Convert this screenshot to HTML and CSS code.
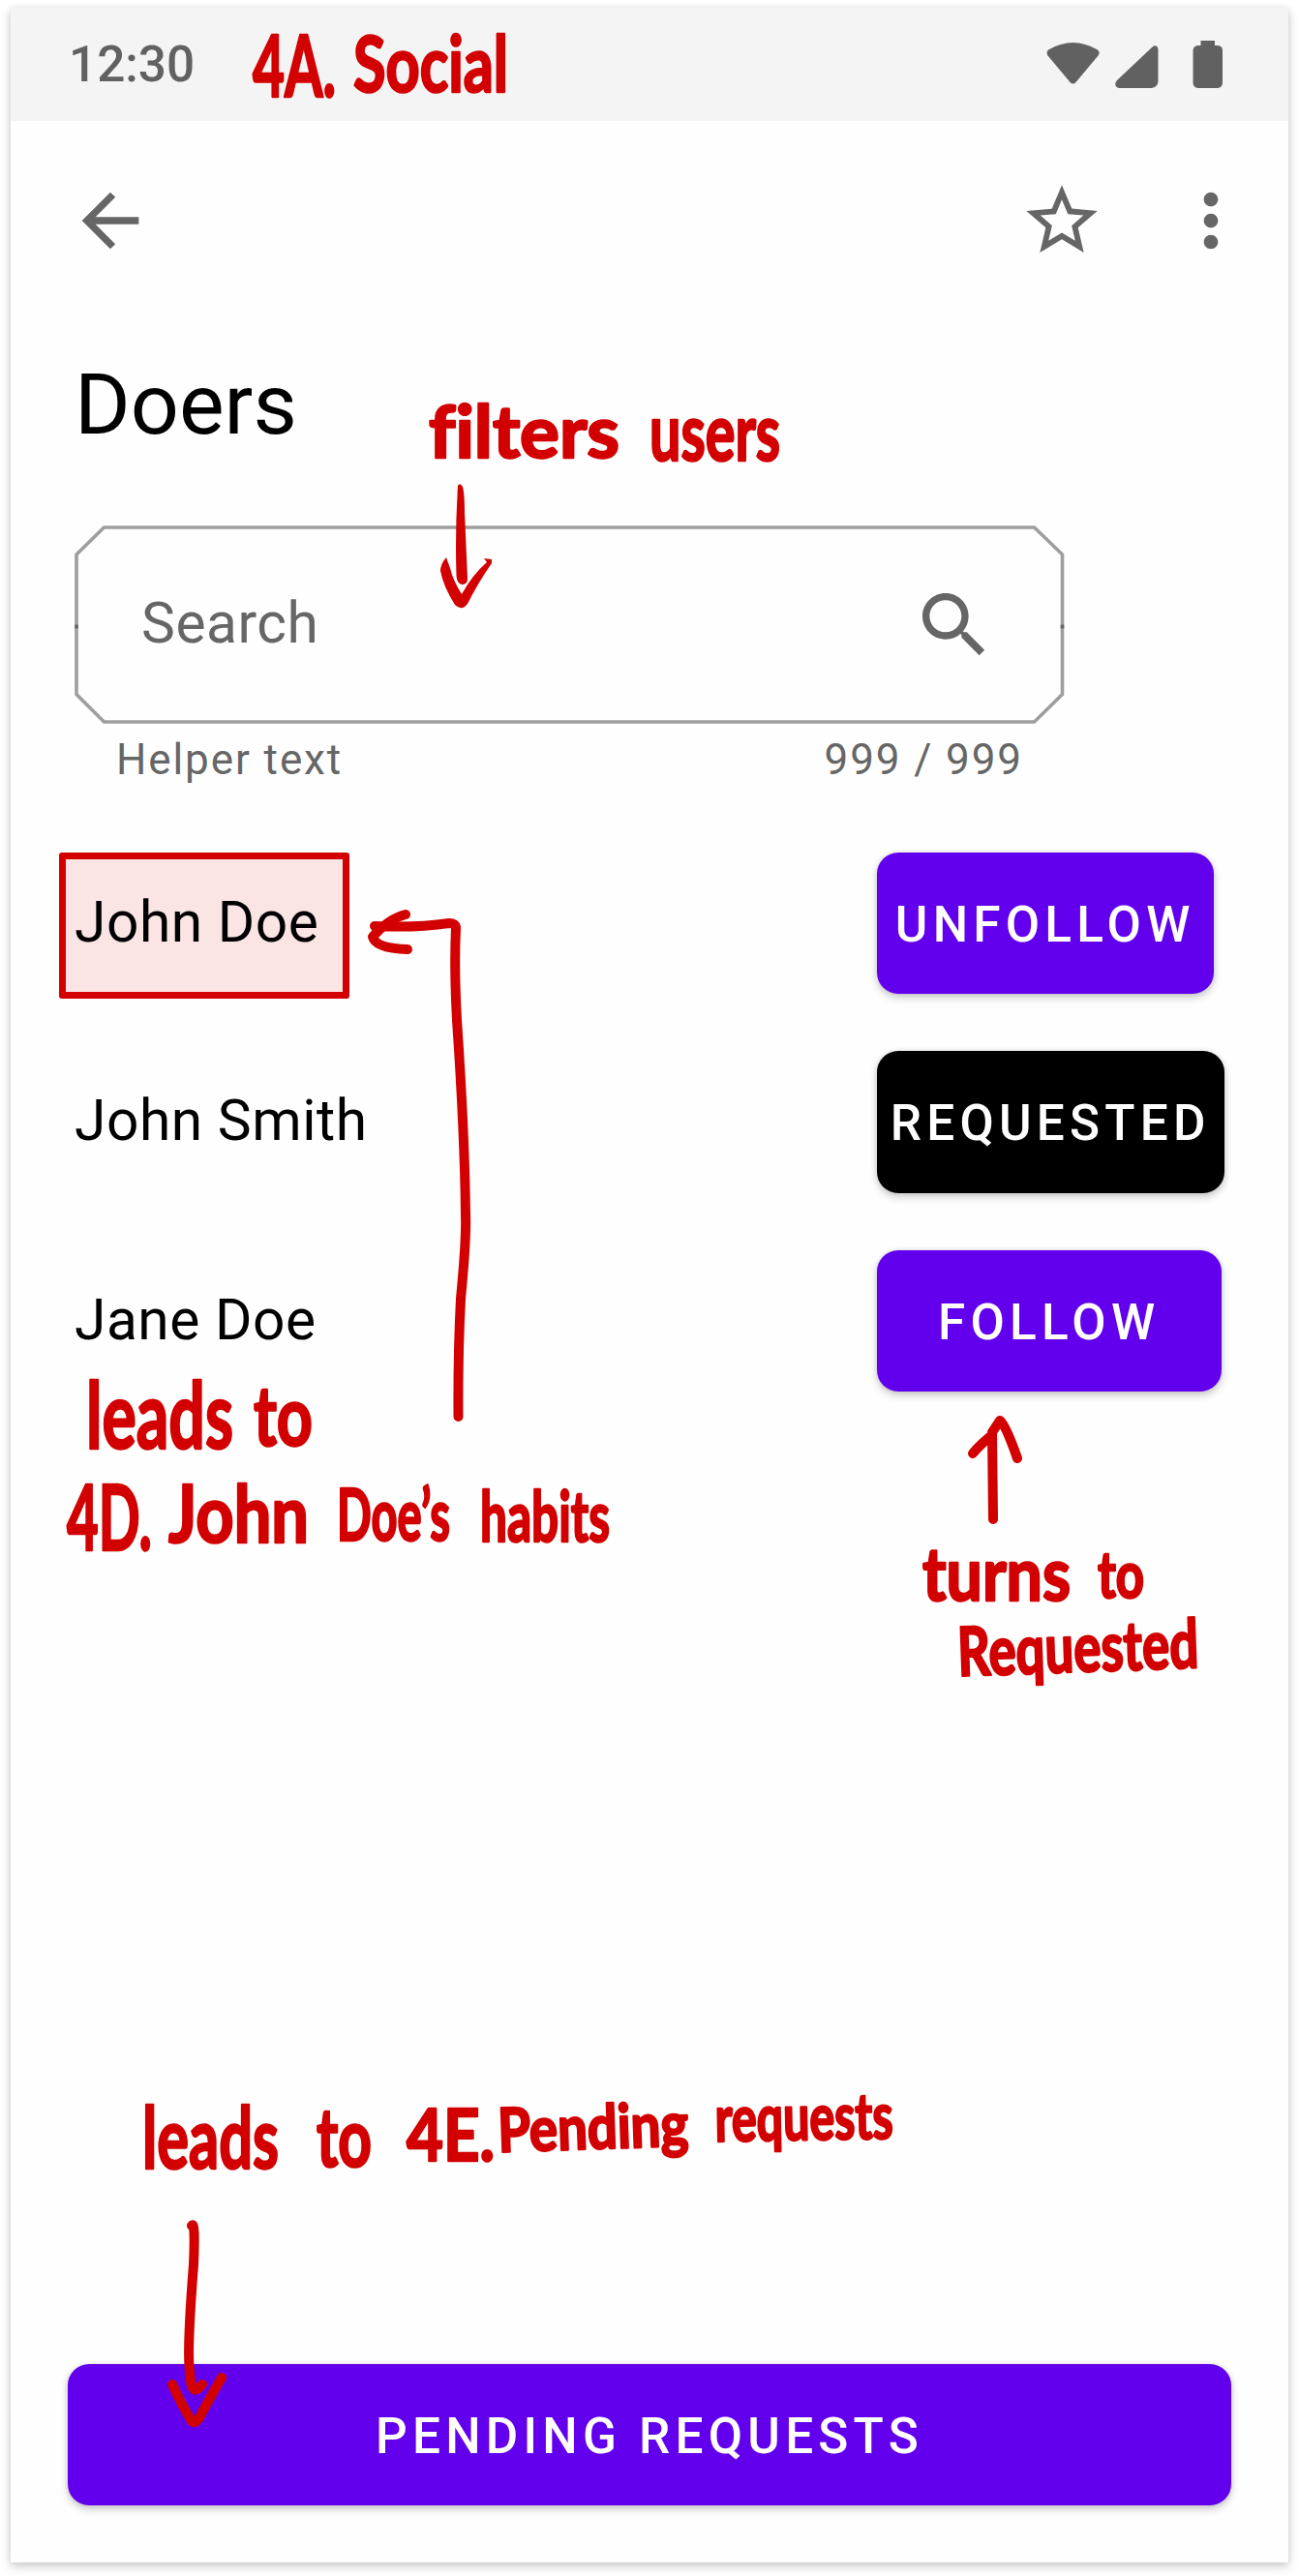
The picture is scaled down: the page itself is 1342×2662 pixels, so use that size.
FILE: index.html
```html
<!DOCTYPE html>
<html lang="en">
<head>
<meta charset="utf-8">
<title>4A. Social</title>
<link rel="stylesheet" href="styles.css">
</head>
<body>
<main class="phone">
  <header class="status">
    <span>12:30</span>
    <svg width="182" height="49" viewBox="0 0 182 49" fill="#616161">
      <path d="M2 9.5Q27.500 -5.500 53 9.500Q56 12 53.500 15.500L30.500 43Q27.500 46 24.500 43L1.500 15.500Q-0.500 12 2 9.500Z"/>
      <path d="M75 49Q71.500 48.500 71.200 45Q71.300 43 73 41L109 7Q111 4.500 113.500 5.500Q115.500 6.500 115.500 9V42Q115 48 108.500 49Z"/>
      <path d="M159.500 0H174V5H177Q182 5.500 182 10V44Q181.500 48.500 177 49H156.500Q152 48.500 151.500 44V10Q152 5.500 156.500 5H159.500Z"/>
    </svg>
  </header>
  <nav class="appbar">
    <svg class="icon" viewBox="0 0 24 24"><path d="M20 11H7.830l5.590-5.590L12 4l-8 8 8 8 1.410-1.410L7.830 13H20z"/></svg>
    <span class="appbar-actions">
      <svg class="icon" viewBox="0 0 24 24"><path d="M22 9.240l-7.190-.62L12 2 9.190 8.630 2 9.240l5.460 4.730L5.820 21 12 17.270 18.180 21l-1.630-7.030zM12 15.400l-3.760 2.270 1-4.280-3.320-2.880 4.380-.38L12 6.100l1.710 4.040 4.380.38-3.320 2.880 1 4.280z"/></svg>
      <svg class="icon" viewBox="0 0 24 24"><path d="M12 8c1.100 0 2-.9 2-2s-.9-2-2-2-2 .9-2 2 .9 2 2 2zm0 2c-1.100 0-2 .9-2 2s.9 2 2 2 2-.9 2-2-.9-2-2-2zm0 6c-1.100 0-2 .9-2 2s.9 2 2 2 2-.9 2-2-.9-2-2-2z"/></svg>
    </span>
  </nav>
  <h1 class="title">Doers</h1>
  <div class="field">
    <svg class="outline" width="1024" height="205" viewBox="0 0 1024 205"><path d="M30.500 2H991.500L1020.500 30V174.500L991.500 203H30.500L2 174.500V30Z" fill="none" stroke="#9e9e9e" stroke-width="3.600"/><path d="M0.200 102.500h3.600v4H0.200zM1018.700 102.500h3.600v4h-3.600z" fill="#666"/></svg>
    <span class="placeholder">Search</span>
    <svg class="icon" viewBox="0 0 24 24"><path d="M15.500 14h-.79l-.28-.27C15.410 12.590 16 11.110 16 9.500 16 5.910 13.090 3 9.500 3S3 5.910 3 9.500 5.910 16 9.500 16c1.610 0 3.090-.59 4.230-1.570l.27.28v.79l5 4.990L20.490 19l-4.990-5zm-6 0C7.010 14 5 11.990 5 9.500S7.010 5 9.500 5 14 7.010 14 9.500 11.990 14 9.500 14z"/></svg>
  </div>
  <div class="helper"><span>Helper text</span><span>999 / 999</span></div>
  <section class="list">
    <div class="row"><span class="name marked">John Doe</span><button class="btn unfollow">UNFOLLOW</button></div>
    <div class="row"><span class="name">John Smith</span><button class="btn requested">REQUESTED</button></div>
    <div class="row"><span class="name">Jane Doe</span><button class="btn follow">FOLLOW</button></div>
  </section>
  <button class="btn pending">PENDING REQUESTS</button>
</main>

<!-- review notes laid over the screen -->
<svg class="notes" width="1342" height="2662" viewBox="0 0 1342 2662">
  <g class="hand">
    <text x="261" y="100" font-size="88" textLength="86" lengthAdjust="spacingAndGlyphs">4A.</text>
    <text x="365" y="95" font-size="80" textLength="160" lengthAdjust="spacingAndGlyphs">Social</text>
    <text x="443" y="473" font-size="75" textLength="197" lengthAdjust="spacingAndGlyphs">filters</text>
    <text x="671" y="476" font-size="82" textLength="135" lengthAdjust="spacingAndGlyphs">users</text>
    <text x="89" y="1497" font-size="96" textLength="152" lengthAdjust="spacingAndGlyphs">leads</text>
    <text x="262" y="1494" font-size="86" textLength="61" lengthAdjust="spacingAndGlyphs">to</text>
    <text x="69" y="1602" font-size="94" textLength="88" lengthAdjust="spacingAndGlyphs">4D.</text>
    <text x="174" y="1594" font-size="82" textLength="145" lengthAdjust="spacingAndGlyphs">John</text>
    <text x="348" y="1592" font-size="75" textLength="117" lengthAdjust="spacingAndGlyphs">Doe’s</text>
    <text x="496" y="1593" font-size="73" textLength="134" lengthAdjust="spacingAndGlyphs">habits</text>
    <text x="953" y="1654" font-size="76" textLength="153" lengthAdjust="spacingAndGlyphs">turns</text>
    <text x="1134" y="1651" font-size="66" textLength="48" lengthAdjust="spacingAndGlyphs">to</text>
    <text x="990" y="1732" font-size="70" textLength="249" lengthAdjust="spacingAndGlyphs" transform="rotate(-2 990 1732)">Requested</text>
    <text x="147" y="2241" font-size="88" textLength="141" lengthAdjust="spacingAndGlyphs">leads</text>
    <text x="327" y="2239" font-size="84" textLength="57" lengthAdjust="spacingAndGlyphs">to</text>
    <text x="420" y="2233" font-size="75" textLength="91" lengthAdjust="spacingAndGlyphs">4E.</text>
    <text x="515" y="2224" font-size="63" textLength="197" lengthAdjust="spacingAndGlyphs" transform="rotate(-2 515 2224)">Pending</text>
    <text x="739" y="2213" font-size="66" textLength="184" lengthAdjust="spacingAndGlyphs" transform="rotate(-1 739 2213)">requests</text>
  </g>
  <g class="ink-fill">
    <path d="M473 502Q475 498 478 503Q480 510 480 530L483 598Q483 604 477 604Q472 603 471.500 595Q470 550 473 502Z"/>
    <path d="M461 576Q455 583 455 590Q458 606 470 625Q477 632 483 624Q494 602 508 582V578L500 577L503 581Q488 594 477 614Q468 600 465 587Z"/>
  </g>
  <g class="ink">
    <path d="M473.500 1464Q473 1400 476 1342Q482 1280 481 1255Q480 1170 472 1054Q469 1000 471 959Q471 954 464 954Q430 959 387 957"/>
    <path d="M419 945Q402 949 385 968Q388 980 421 981"/>
    <path d="M1026 1570L1025 1480L1033 1468Q1038 1470 1051 1507M1005 1502Q1012 1493 1025 1483"/>
    <path d="M198 2300Q202 2294 200 2340Q193 2430 196 2450Q197 2480 209 2464"/>
    <path d="M178 2464Q188 2486 198 2502Q201 2505 205 2500Q219 2474 229 2457"/>
  </g>
</svg>
</body>
</html>
```
FILE: styles.css
```css
* { box-sizing: border-box; }
body {
  margin: 0;
  padding: 8px 11px 14px;
  height: 2662px;
  overflow: hidden;
  position: relative;
  background: #fff;
  font-family: Roboto, sans-serif;
}
.phone {
  width: 1320px;
  height: 2640px;
  display: flex;
  flex-direction: column;
  background: #fefefe;
  box-shadow: 0 4px 10px rgba(0, 0, 0, .2), 0 0 6px rgba(0, 0, 0, .07);
}
.status {
  height: 117px;
  padding: 0 68px 0 60px;
  display: flex;
  align-items: center;
  justify-content: space-between;
  background: #f4f4f4;
  color: #616161;
  font-size: 51.3px;
  font-weight: 500;
  line-height: 60px;
}
.icon { width: 88px; height: 88px; fill: #666; display: block; }
.appbar {
  margin-top: 59px;
  padding: 0 36px 0 59px;
  display: flex;
  justify-content: space-between;
}
.appbar-actions { display: flex; gap: 66px; }
.title {
  margin: 94px 0 0 66px;
  font-size: 88px;
  line-height: 104px;
  font-weight: 400;
  color: #000;
}
.field {
  position: relative;
  width: 1024px;
  height: 205px;
  margin: 73px 0 0 66px;
  padding: 0 71px 0 69px;
  display: flex;
  align-items: center;
  justify-content: space-between;
}
.outline { position: absolute; left: 0; top: 0; }
.placeholder { font-size: 58.67px; letter-spacing: .55px; line-height: 70px; margin-bottom: 3px; color: #666; }
.helper {
  width: 1024px;
  margin: 11px 0 0 66px;
  padding: 0 44px 0 43px;
  display: flex;
  justify-content: space-between;
  font-size: 44px;
  line-height: 52px;
  letter-spacing: 1.9px;
  color: #666;
}
.list {
  margin: 69.500px 0 0 50px;
  display: flex;
  flex-direction: column;
  gap: 59px;
}
.row { display: grid; grid-template-columns: 844.700px auto; justify-content: start; align-items: start; height: 146.500px; }
.name {
  width: 300px;
  height: 151px;
  padding: 37px 0 0 16px;
  font-size: 58.67px;
  line-height: 70px;
  letter-spacing: .55px;
  color: #000;
  white-space: nowrap;
}
.marked { background: #fae4e4; border: 7px solid #d20000; border-radius: 3px; padding: 30px 0 0 9px; }
.btn {
  height: 146.500px;
  padding: 4px 0 0;
  border: 0;
  border-radius: 22px;
  background: #6200ee;
  color: #fff;
  font: 500 51.3px/60px Roboto, sans-serif;
  letter-spacing: 5.230px;
  white-space: nowrap;
  box-shadow: 0 4px 8px rgba(0, 0, 0, .2), 0 0 5px rgba(0, 0, 0, .1);
}
.unfollow { width: 348px; }
.requested { width: 359px; background: #000; }
.follow { width: 356px; }
.pending { width: 1202px; margin: auto 0 59px 59px; }
.notes { position: absolute; left: 0; top: 0; }
.hand text {
  font-family: Lato, sans-serif;
  font-weight: 700;
  font-variant-ligatures: none;
  fill: #d20000;
  stroke: #d20000;
  stroke-width: 2.500px;
  stroke-linejoin: round;
}
.ink-fill { fill: #d20000; }
.ink { fill: none; stroke: #d20000; stroke-width: 10px; stroke-linecap: round; stroke-linejoin: round; }
```
